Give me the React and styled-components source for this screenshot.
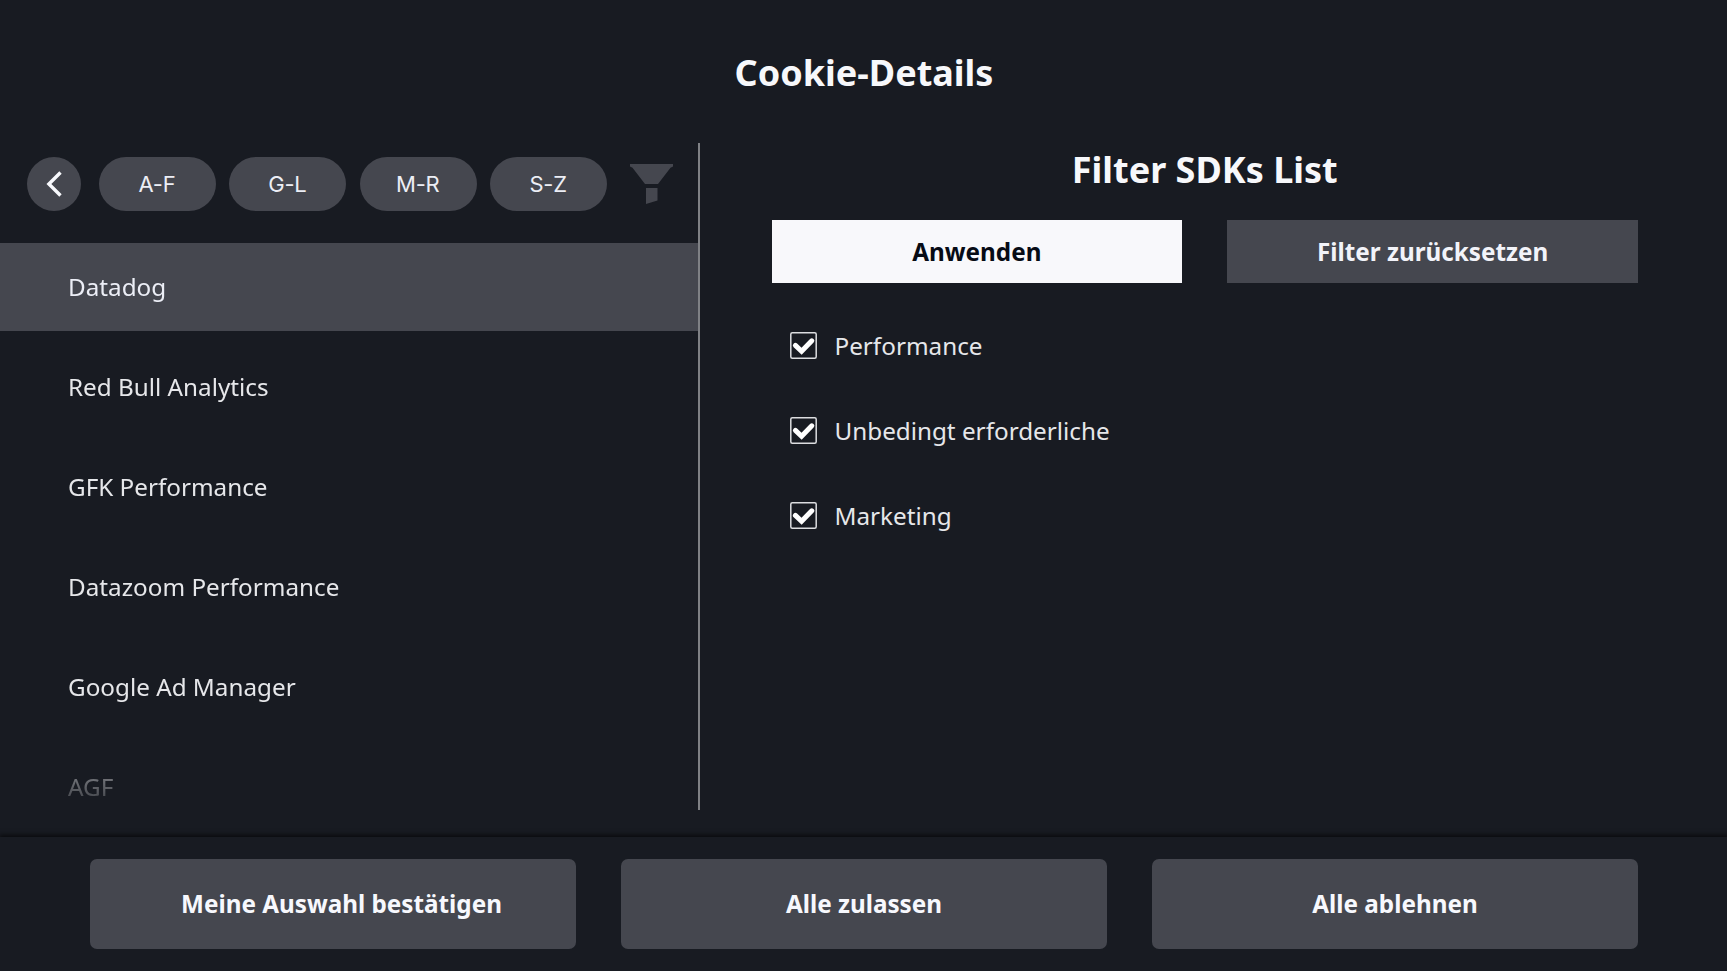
import React, { useState } from "react";
import styled, { createGlobalStyle } from "styled-components";

const GlobalStyle = createGlobalStyle`
  *, *::before, *::after { box-sizing: border-box; }
  body {
    margin: 0;
    background: #181b22;
    font-family: "Noto Sans", sans-serif;
  }
  button {
    border: 0;
    margin: 0;
    padding: 0;
    font: inherit;
    cursor: pointer;
  }
`;

const Page = styled.div`
  display: flex;
  flex-direction: column;
  width: 100%;
  height: 971px;
  overflow: hidden;
  color: #f7f8fb;
  background: #181b22;
`;

const Header = styled.header`
  height: 143px;
  padding: 48px 0 0 1px;
  flex: none;
  text-align: center;
`;

const Title = styled.h1`
  margin: 0;
  font-size: 36px;
  font-weight: 700;
  line-height: 50px;
`;

const Content = styled.main`
  display: flex;
  flex: none;
  height: 667px;
`;

const ListPane = styled.section`
  display: flex;
  flex-direction: column;
  width: 699.5px;
  border-right: 2px solid #7f8185;
`;

const Toolbar = styled.div`
  display: flex;
  align-items: center;
  flex: none;
  height: 54px;
  margin: 14px 0 32.4px;
  padding-left: 27px;
`;

const RoundButton = styled.button`
  display: grid;
  place-items: center;
  width: 54px;
  height: 54px;
  margin-right: 18px;
  border-radius: 50%;
  background: #45474f;
`;

const Ranges = styled.div`
  display: flex;
  gap: 13.4px;
`;

const RangeButton = styled.button`
  width: 117px;
  height: 54px;
  padding-right: 1px;
  border-radius: 27px;
  color: #eceef5;
  background: #45474f;
  font-family: Inter, sans-serif;
  font-size: 22px;
  letter-spacing: -0.2px;
`;

const FilterButton = styled.button`
  display: flex;
  margin-left: 23.3px;
  background: none;
`;

const List = styled.ul`
  display: flex;
  flex-direction: column;
  gap: 12.5px;
  flex: 1;
  min-height: 0;
  margin: 0;
  padding: 0;
  overflow: hidden;
  list-style: none;
  mask-image: linear-gradient(to bottom, #000 475px, transparent 580px);
`;

const ListItem = styled.li`
  display: flex;
  align-items: center;
  flex: none;
  height: 87.5px;
  padding: 0 0 1px 68px;
  color: ${({ $active }) => ($active ? "#eceef6" : "#e6e7ea")};
  background: ${({ $active }) => ($active ? "#45474f" : "transparent")};
  font-size: 24.25px;
  cursor: pointer;
`;

const FilterPane = styled.section`
  flex: 1;
  padding: 0 89px 0 72px;
`;

const PaneTitle = styled.h2`
  margin: 2px 0 25px;
  font-size: 36px;
  font-weight: 700;
  line-height: 50px;
  text-align: center;
`;

const FilterActions = styled.div`
  display: grid;
  grid-template-columns: 1fr 1fr;
  gap: 45px;
`;

const ActionButton = styled.button`
  height: 63px;
  color: ${({ $primary }) => ($primary ? "#070b15" : "#f2f3f9")};
  background: ${({ $primary }) => ($primary ? "#f8f8fb" : "#45474f")};
  font-size: 24.25px;
  font-weight: 700;
`;

const Options = styled.div`
  display: flex;
  flex-direction: column;
  gap: 57.6px;
  padding: 49.4px 0 0 18px;
`;

const Option = styled.button`
  display: flex;
  align-items: center;
  gap: 18px;
  height: 27px;
  color: #e6e7ea;
  background: none;
  font-size: 24.25px;
  line-height: 27px;
`;

const Footer = styled.footer`
  display: grid;
  grid-template-columns: repeat(3, 1fr);
  gap: 45px;
  flex: none;
  height: 134px;
  margin-top: 27px;
  padding: 22px 89px 22px 90px;
  background: #181b22;
  box-shadow: 0 -1px 5px 1px rgba(0, 0, 0, 0.65);
`;

const FooterButton = styled.button`
  padding: 0 0 1px ${({ $indent }) => $indent || 0}px;
  border-radius: 7px;
  color: #f7f8fd;
  background: #45474f;
  font-size: 24.25px;
  font-weight: 700;
`;

const BackIcon = () => (
  <svg width="54" height="54" viewBox="0 0 54 54" fill="none">
    <path d="M33.8 15.5 22.2 27l11.6 11.5" transform="translate(-0.3 0)" stroke="#f8f9fd" strokeWidth="3.4" />
  </svg>
);

const FunnelIcon = () => (
  <svg width="43" height="40" viewBox="0 0 43 40" fill="#45474f">
    <path d="M0 0h43v2.5l-2.5 1.2L28 20H15L2.5 3.7 0 2.5Z" />
    <path d="M16 24h11.5v12.5L16 40Z" />
  </svg>
);

const CheckBox = ({ checked }) => (
  <svg width="27" height="27" viewBox="0 0 27 27" fill="none">
    <rect x="0.8" y="0.8" width="25.4" height="25.4" rx="1.5" stroke="#dcdde0" strokeWidth="1.5" />
    {checked && (
      <path
        d="m5.4 13.4 6.2 5.9L21.8 8.8"
        stroke="#fff"
        strokeWidth="5"
        strokeLinecap="round"
      />
    )}
  </svg>
);

const ranges = ["A-F", "G-L", "M-R", "S-Z"];
const vendors = [
  "Datadog",
  "Red Bull Analytics",
  "GFK Performance",
  "Datazoom Performance",
  "Google Ad Manager",
  "AGF",
];
const categories = ["Performance", "Unbedingt erforderliche", "Marketing"];

export default function App() {
  const [active, setActive] = useState(vendors[0]);
  const [selected, setSelected] = useState(categories);

  const toggle = (name) =>
    setSelected((current) =>
      current.includes(name) ? current.filter((c) => c !== name) : [...current, name]
    );

  return (
    <Page>
      <GlobalStyle />
      <Header>
        <Title>Cookie-Details</Title>
      </Header>
      <Content>
        <ListPane>
          <Toolbar>
            <RoundButton>
              <BackIcon />
            </RoundButton>
            <Ranges>
              {ranges.map((range) => (
                <RangeButton key={range}>{range}</RangeButton>
              ))}
            </Ranges>
            <FilterButton>
              <FunnelIcon />
            </FilterButton>
          </Toolbar>
          <List>
            {vendors.map((vendor) => (
              <ListItem key={vendor} $active={vendor === active} onClick={() => setActive(vendor)}>
                {vendor}
              </ListItem>
            ))}
          </List>
        </ListPane>
        <FilterPane>
          <PaneTitle>Filter SDKs List</PaneTitle>
          <FilterActions>
            <ActionButton $primary>Anwenden</ActionButton>
            <ActionButton onClick={() => setSelected(categories)}>Filter zurücksetzen</ActionButton>
          </FilterActions>
          <Options>
            {categories.map((name) => (
              <Option key={name} onClick={() => toggle(name)}>
                <CheckBox checked={selected.includes(name)} />
                {name}
              </Option>
            ))}
          </Options>
        </FilterPane>
      </Content>
      <Footer>
        <FooterButton $indent={17}>Meine Auswahl bestätigen</FooterButton>
        <FooterButton>Alle zulassen</FooterButton>
        <FooterButton>Alle ablehnen</FooterButton>
      </Footer>
    </Page>
  );
}
